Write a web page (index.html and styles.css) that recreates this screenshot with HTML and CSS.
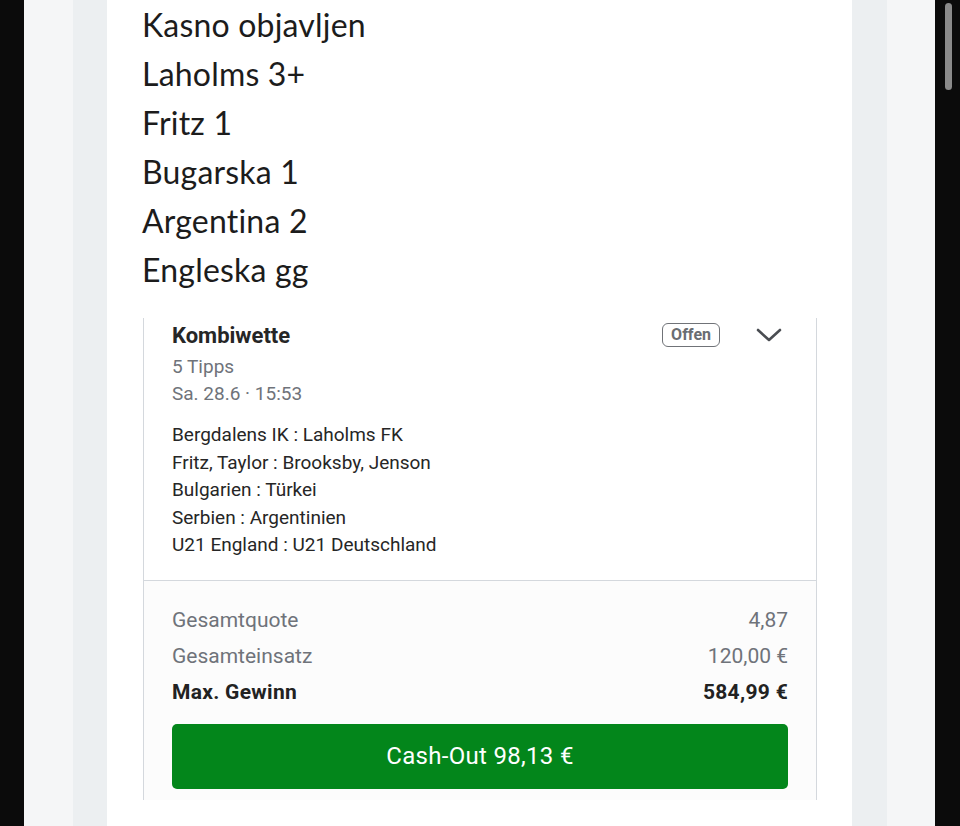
FILE: index.html
```html
<!DOCTYPE html>
<html lang="hr">

<head>
    <meta charset="UTF-8">
    <title>Tiket</title>
    <link rel="stylesheet" href="styles.css">
</head>

<body>
    <div class="screen">
        <div class="side side-left">
            <div class="side-inner"></div>
        </div>
        <main class="column">
            <div class="post">
                <p>Kasno objavljen</p>
                <p>Laholms 3+</p>
                <p>Fritz 1</p>
                <p>Bugarska 1</p>
                <p>Argentina 2</p>
                <p>Engleska gg</p>
            </div>
            <div class="bet-card">
                <div class="bet-body">
                    <div class="bet-head">
                        <h2>Kombiwette</h2>
                        <div class="bet-actions">
                            <span class="badge">Offen</span>
                            <svg class="chevron" width="26" height="16" viewBox="0 0 26 16">
                                <polyline points="2,3 13,13 24,3" fill="none" stroke="#4a4d52" stroke-width="2.6" stroke-linecap="round" stroke-linejoin="round"/>
                            </svg>
                        </div>
                    </div>
                    <div class="meta">5 Tipps</div>
                    <div class="meta">Sa. 28.6 · 15:53</div>
                    <ul class="matches">
                        <li>Bergdalens IK : Laholms FK</li>
                        <li>Fritz, Taylor : Brooksby, Jenson</li>
                        <li>Bulgarien : Türkei</li>
                        <li>Serbien : Argentinien</li>
                        <li>U21 England : U21 Deutschland</li>
                    </ul>
                </div>
                <div class="bet-foot">
                    <div class="row"><span>Gesamtquote</span><span>4,87</span></div>
                    <div class="row"><span>Gesamteinsatz</span><span>120,00 €</span></div>
                    <div class="row strong"><span>Max. Gewinn</span><span>584,99 €</span></div>
                    <button class="cashout">Cash-Out 98,13 €</button>
                </div>
            </div>
        </main>
        <div class="side side-right">
            <div class="side-inner"></div>
        </div>
        <div class="scrollbar"><div class="thumb"></div></div>
    </div>
</body>

</html>
```

FILE: styles.css
```css
body {
    margin: 0;
    padding: 0;
    background: #0b0b0b;
    height: 826px;
    overflow: hidden;
}

.screen {
    display: flex;
    height: 826px;
    margin: 0 25px 0 24px;
}

.side {
    width: 83px;
    display: flex;
    background: #f5f6f7;
}

.side-left {
    justify-content: flex-end;
}

.side-right {
    justify-content: flex-start;
}

.side-inner {
    width: 34px;
    background: #eceff1;
}

.side-right .side-inner {
    width: 35px;
}

.column {
    width: 745px;
    background: #ffffff;
    padding: 0 35px;
    box-sizing: border-box;
}

.post {
    font-family: Lato, 'Open Sans', sans-serif;
    font-size: 32px;
    line-height: 49px;
    letter-spacing: 0.2px;
    font-variant-ligatures: none;
    color: #1c1c1c;
}

.post p {
    margin: 0;
}

.bet-card {
    margin: 24px 0 0 1px;
    border-left: 1px solid #d4d8dd;
    border-right: 1px solid #d4d8dd;
    font-family: Roboto, Arial, sans-serif;
    color: #262626;
}

.bet-body {
    padding: 2px 28px 21px;
}

.bet-head {
    display: flex;
    justify-content: space-between;
    align-items: center;
    height: 30px;
}

.bet-head h2 {
    margin: 0;
    font-size: 22px;
    font-weight: 700;
}

.bet-actions {
    display: flex;
    align-items: center;
    gap: 36px;
}

.badge {
    border: 1.5px solid #707378;
    border-radius: 6px;
    padding: 0 8px;
    height: 22px;
    line-height: 22px;
    font-size: 16px;
    font-weight: 700;
    color: #6a6d72;
}

.chevron {
    display: block;
    margin-right: 6px;
}

.meta {
    font-size: 19px;
    line-height: 27px;
    color: #6f737a;
}

.bet-head + .meta {
    margin-top: 3px;
}

.matches {
    list-style: none;
    margin: 14px 0 0;
    padding: 0;
    font-size: 19px;
    line-height: 27.5px;
}

.bet-foot {
    border-top: 1px solid #d4d8dd;
    background: #fcfcfc;
    padding: 21px 28px 11px;
}

.row {
    display: flex;
    justify-content: space-between;
    font-size: 21px;
    line-height: 36px;
    color: #6f737a;
}

.row.strong {
    color: #222;
    font-weight: 700;
    letter-spacing: 0.3px;
}

.cashout {
    display: block;
    width: 100%;
    height: 65px;
    margin-top: 14px;
    border: none;
    border-radius: 5px;
    background: #03861b;
    color: #fff;
    font-family: Roboto, Arial, sans-serif;
    font-size: 24px;
    font-weight: 400;
    letter-spacing: 0.3px;
    cursor: pointer;
}

.scrollbar {
    position: absolute;
    top: 0;
    right: 0;
    width: 25px;
    height: 826px;
}

.thumb {
    position: absolute;
    top: 3px;
    left: 10px;
    width: 7px;
    height: 87px;
    border-radius: 4px;
    background: #8a8a8a;
}
```
